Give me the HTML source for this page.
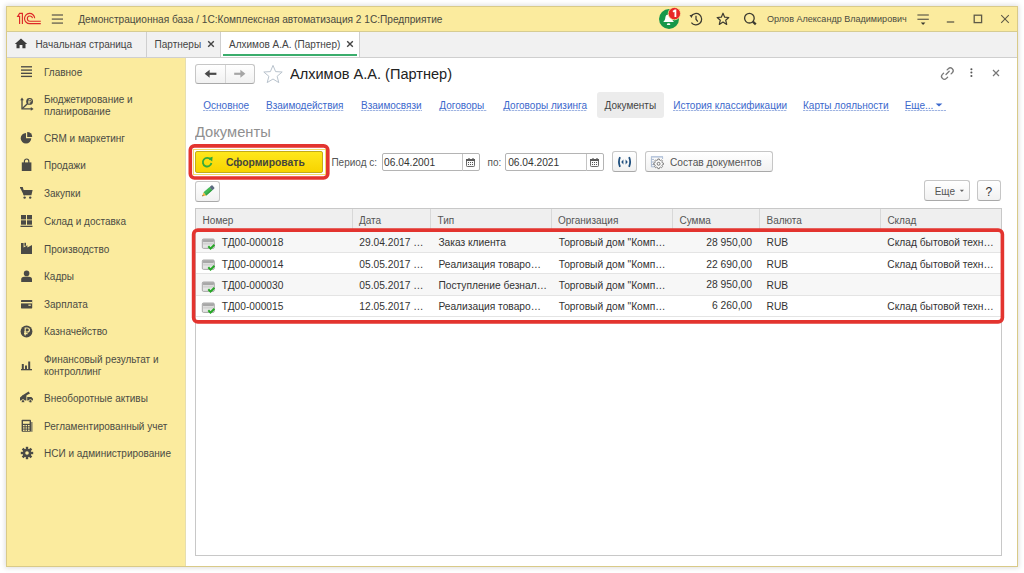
<!DOCTYPE html>
<html><head><meta charset="utf-8">
<style>
*{box-sizing:border-box;margin:0;padding:0}
html,body{width:1024px;height:573px;overflow:hidden;background:#fff;font-family:"Liberation Sans",sans-serif;color:#333}
.a{position:absolute;white-space:nowrap}
svg.a{overflow:visible}
</style></head><body>
<div class="a" style="left:6px;top:6px;width:1012px;height:561px;background:#fff;box-shadow:0 0 5px 1px rgba(0,0,0,0.13)"></div>
<div class="a" style="left:6px;top:6px;width:1012px;height:26px;background:#fbeb9e;border-bottom:1px solid #d6cc92"></div>
<div class="a" style="left:6px;top:32px;width:1012px;height:26px;background:#f1f1f1;border-bottom:1px solid #cfcfcf"></div>
<div class="a" style="left:6px;top:58px;width:180px;height:509px;background:#fbeb9e"></div>
<div class="a" style="left:185px;top:58px;width:1px;height:509px;background:#e6deb0"></div>
<div class="a" style="left:6px;top:6px;width:1012px;height:561px;border:1px solid #d9ca88"></div>
<div class="a" style="left:78.2px;top:15.42px;font-size:10.13px;line-height:10.13px;color:#4a4a40;font-weight:normal;">Демонстрационная база / 1С:Комплексная автоматизация 2 1С:Предприятие</div>
<div class="a" style="left:767px;top:14.32px;font-size:9.9px;line-height:9.9px;color:#4a4a40;font-weight:normal;transform:scaleX(0.9152);transform-origin:0 0;">Орлов Александр Владимирович</div>
<div class="a" style="left:35.4px;top:40.23px;font-size:10px;line-height:10px;color:#444;font-weight:normal;">Начальная страница</div>
<div class="a" style="left:146px;top:32px;width:1px;height:25px;background:#cfcfcf"></div>
<div class="a" style="left:154.6px;top:40.23px;font-size:10px;line-height:10px;color:#444;font-weight:normal;">Партнеры</div>
<div class="a" style="left:220px;top:32px;width:1px;height:25px;background:#cfcfcf"></div>
<div class="a" style="left:221px;top:32px;width:138px;height:25px;background:#fff"></div>
<div class="a" style="left:223px;top:54px;width:134px;height:2px;background:#3aad6c"></div>
<div class="a" style="left:229px;top:40.23px;font-size:10px;line-height:10px;color:#444;font-weight:normal;">Алхимов А.А. (Партнер)</div>
<div class="a" style="left:359px;top:32px;width:1px;height:25px;background:#cfcfcf"></div>
<div class="a" style="left:44px;top:67.63px;font-size:10px;line-height:10px;color:#4b4b44;font-weight:normal;">Главное</div>
<div class="a" style="left:44px;top:94.63px;font-size:10px;line-height:10px;color:#4b4b44;font-weight:normal;">Бюджетирование и</div>
<div class="a" style="left:44px;top:106.63px;font-size:10px;line-height:10px;color:#4b4b44;font-weight:normal;">планирование</div>
<div class="a" style="left:44px;top:133.63px;font-size:10px;line-height:10px;color:#4b4b44;font-weight:normal;">CRM и маркетинг</div>
<div class="a" style="left:44px;top:160.63px;font-size:10px;line-height:10px;color:#4b4b44;font-weight:normal;">Продажи</div>
<div class="a" style="left:44px;top:188.63px;font-size:10px;line-height:10px;color:#4b4b44;font-weight:normal;">Закупки</div>
<div class="a" style="left:44px;top:216.63px;font-size:10px;line-height:10px;color:#4b4b44;font-weight:normal;">Склад и доставка</div>
<div class="a" style="left:44px;top:244.63px;font-size:10px;line-height:10px;color:#4b4b44;font-weight:normal;">Производство</div>
<div class="a" style="left:44px;top:271.63px;font-size:10px;line-height:10px;color:#4b4b44;font-weight:normal;">Кадры</div>
<div class="a" style="left:44px;top:299.63px;font-size:10px;line-height:10px;color:#4b4b44;font-weight:normal;">Зарплата</div>
<div class="a" style="left:44px;top:327.13px;font-size:10px;line-height:10px;color:#4b4b44;font-weight:normal;">Казначейство</div>
<div class="a" style="left:44px;top:354.63px;font-size:10px;line-height:10px;color:#4b4b44;font-weight:normal;">Финансовый результат и</div>
<div class="a" style="left:44px;top:366.63px;font-size:10px;line-height:10px;color:#4b4b44;font-weight:normal;">контроллинг</div>
<div class="a" style="left:44px;top:393.63px;font-size:10px;line-height:10px;color:#4b4b44;font-weight:normal;">Внеоборотные активы</div>
<div class="a" style="left:44px;top:421.63px;font-size:10px;line-height:10px;color:#4b4b44;font-weight:normal;">Регламентированный учет</div>
<div class="a" style="left:44px;top:448.63px;font-size:10px;line-height:10px;color:#4b4b44;font-weight:normal;">НСИ и администрирование</div>
<div class="a" style="left:195px;top:64px;width:60px;height:20px;border:1px solid #c6c6c6;border-bottom-color:#a9a9a9;border-radius:3px;background:linear-gradient(#fff,#f1f1f1)"></div>
<div class="a" style="left:225px;top:65px;width:1px;height:18px;background:#d6d6d6"></div>
<div class="a" style="left:290.2px;top:66.06px;font-size:15.4px;line-height:15.4px;color:#222;font-weight:normal;transform:scaleX(0.9461);transform-origin:0 0;">Алхимов А.А. (Партнер)</div>
<div class="a" style="left:203.3px;top:100.93px;font-size:10px;line-height:10px;color:#3b68cc;font-weight:normal;">Основное</div>
<div class="a" style="left:203.3px;top:110px;width:46px;height:1px;background:repeating-linear-gradient(90deg,#9fb4e2 0 2px,#dfe6f5 2px 3px)"></div>
<div class="a" style="left:266px;top:100.93px;font-size:10px;line-height:10px;color:#3b68cc;font-weight:normal;">Взаимодействия</div>
<div class="a" style="left:266px;top:110px;width:78px;height:1px;background:repeating-linear-gradient(90deg,#9fb4e2 0 2px,#dfe6f5 2px 3px)"></div>
<div class="a" style="left:361px;top:100.93px;font-size:10px;line-height:10px;color:#3b68cc;font-weight:normal;">Взаимосвязи</div>
<div class="a" style="left:361px;top:110px;width:61px;height:1px;background:repeating-linear-gradient(90deg,#9fb4e2 0 2px,#dfe6f5 2px 3px)"></div>
<div class="a" style="left:439.3px;top:100.93px;font-size:10px;line-height:10px;color:#3b68cc;font-weight:normal;">Договоры</div>
<div class="a" style="left:439.3px;top:110px;width:48px;height:1px;background:repeating-linear-gradient(90deg,#9fb4e2 0 2px,#dfe6f5 2px 3px)"></div>
<div class="a" style="left:503.2px;top:100.93px;font-size:10px;line-height:10px;color:#3b68cc;font-weight:normal;">Договоры лизинга</div>
<div class="a" style="left:503.2px;top:110px;width:84px;height:1px;background:repeating-linear-gradient(90deg,#9fb4e2 0 2px,#dfe6f5 2px 3px)"></div>
<div class="a" style="left:597px;top:92px;width:67px;height:26px;background:#ececec;border-radius:3px"></div>
<div class="a" style="left:604.6px;top:100.93px;font-size:10px;line-height:10px;color:#444;font-weight:normal;">Документы</div>
<div class="a" style="left:673.2px;top:100.93px;font-size:10px;line-height:10px;color:#3b68cc;font-weight:normal;">История классификации</div>
<div class="a" style="left:673.2px;top:110px;width:114px;height:1px;background:repeating-linear-gradient(90deg,#9fb4e2 0 2px,#dfe6f5 2px 3px)"></div>
<div class="a" style="left:803px;top:100.93px;font-size:10px;line-height:10px;color:#3b68cc;font-weight:normal;">Карты лояльности</div>
<div class="a" style="left:803px;top:110px;width:86px;height:1px;background:repeating-linear-gradient(90deg,#9fb4e2 0 2px,#dfe6f5 2px 3px)"></div>
<div class="a" style="left:904.7px;top:100.93px;font-size:10px;line-height:10px;color:#3b68cc;font-weight:normal;">Еще...</div>
<div class="a" style="left:904.7px;top:110px;width:41px;height:1px;background:repeating-linear-gradient(90deg,#9fb4e2 0 2px,#dfe6f5 2px 3px)"></div>
<div class="a" style="left:195.0px;top:124.23px;font-size:15.2px;line-height:15.2px;color:#8f8f8f;font-weight:normal;transform:scaleX(0.9671);transform-origin:0 0;">Документы</div>
<div class="a" style="left:193px;top:149px;width:132.5px;height:26.2px;border:1px solid #f3dc6c;background:#fff"></div>
<div class="a" style="left:195px;top:151px;width:128px;height:21.5px;border:1px solid #c2ab1a;border-radius:2px;background:linear-gradient(#ffe71c,#f7d400)"></div>
<div class="a" style="left:225.9px;top:158.12px;font-size:10.37px;line-height:10.37px;color:#46463c;font-weight:bold;">Сформировать</div>
<div class="a" style="left:331.4px;top:157.73px;font-size:10px;line-height:10px;color:#555;font-weight:normal;">Период с:</div>
<div class="a" style="left:381.5px;top:153px;width:98px;height:18px;border:1px solid #b4b4b4;border-radius:2px;background:#fff"></div>
<div class="a" style="left:462px;top:154px;width:1px;height:16.5px;background:#c4c4c4"></div>
<div class="a" style="left:384.1px;top:157.56px;font-size:10.2px;line-height:10.2px;color:#333;font-weight:normal;">06.04.2001</div>
<div class="a" style="left:487.6px;top:157.73px;font-size:10px;line-height:10px;color:#555;font-weight:normal;">по:</div>
<div class="a" style="left:505.2px;top:153px;width:98.5px;height:18px;border:1px solid #b4b4b4;border-radius:2px;background:#fff"></div>
<div class="a" style="left:586px;top:154px;width:1px;height:16.5px;background:#c4c4c4"></div>
<div class="a" style="left:508.2px;top:157.56px;font-size:10.2px;line-height:10.2px;color:#333;font-weight:normal;">06.04.2021</div>
<div class="a" style="left:612px;top:151px;width:25px;height:21px;border:1px solid #c6c6c6;border-bottom-color:#a9a9a9;border-radius:3px;background:linear-gradient(#fff,#f1f1f1)"></div>
<div class="a" style="left:645px;top:151px;width:128px;height:21px;border:1px solid #c6c6c6;border-bottom-color:#a9a9a9;border-radius:3px;background:linear-gradient(#fff,#f1f1f1)"></div>
<div class="a" style="left:670px;top:157.56px;font-size:10.2px;line-height:10.2px;color:#555;font-weight:normal;">Состав документов</div>
<div class="a" style="left:195px;top:180.5px;width:25px;height:21px;border:1px solid #c6c6c6;border-bottom-color:#a9a9a9;border-radius:3px;background:linear-gradient(#fff,#f1f1f1)"></div>
<div class="a" style="left:923.5px;top:180px;width:46px;height:21px;border:1px solid #c6c6c6;border-bottom-color:#a9a9a9;border-radius:3px;background:linear-gradient(#fff,#f1f1f1)"></div>
<div class="a" style="left:934.7px;top:187.33px;font-size:10px;line-height:10px;color:#555;font-weight:normal;">Еще</div>
<div class="a" style="left:977px;top:180px;width:24px;height:21px;border:1px solid #c6c6c6;border-bottom-color:#a9a9a9;border-radius:3px;background:linear-gradient(#fff,#f1f1f1)"></div>
<div class="a" style="left:985.6px;top:185.84px;font-size:12px;line-height:12px;color:#333;font-weight:normal;">?</div>
<div class="a" style="left:195px;top:208px;width:807px;height:348px;border:1px solid #c8c8c8;background:#fff"></div>
<div class="a" style="left:196px;top:209px;width:805px;height:22px;background:#efefef;border-bottom:1px solid #dcdcdc"></div>
<div class="a" style="left:202.6px;top:215.93px;font-size:10px;line-height:10px;color:#555;font-weight:normal;">Номер</div>
<div class="a" style="left:352px;top:209px;width:1px;height:22px;background:#d8d8d8"></div>
<div class="a" style="left:359px;top:215.93px;font-size:10px;line-height:10px;color:#555;font-weight:normal;">Дата</div>
<div class="a" style="left:430px;top:209px;width:1px;height:22px;background:#d8d8d8"></div>
<div class="a" style="left:437.5px;top:215.93px;font-size:10px;line-height:10px;color:#555;font-weight:normal;">Тип</div>
<div class="a" style="left:551px;top:209px;width:1px;height:22px;background:#d8d8d8"></div>
<div class="a" style="left:558px;top:215.93px;font-size:10px;line-height:10px;color:#555;font-weight:normal;">Организация</div>
<div class="a" style="left:672px;top:209px;width:1px;height:22px;background:#d8d8d8"></div>
<div class="a" style="left:679.5px;top:215.93px;font-size:10px;line-height:10px;color:#555;font-weight:normal;">Сумма</div>
<div class="a" style="left:759px;top:209px;width:1px;height:22px;background:#d8d8d8"></div>
<div class="a" style="left:766.5px;top:215.93px;font-size:10px;line-height:10px;color:#555;font-weight:normal;">Валюта</div>
<div class="a" style="left:880px;top:209px;width:1px;height:22px;background:#d8d8d8"></div>
<div class="a" style="left:887.4px;top:215.93px;font-size:10px;line-height:10px;color:#555;font-weight:normal;">Склад</div>
<div class="a" style="left:196px;top:231px;width:805px;height:21.6px;background:#f7f7f7;border-bottom:1px solid #e4e4e4"></div>
<div class="a" style="left:221.8px;top:237.96px;font-size:10.2px;line-height:10.2px;color:#333;font-weight:normal;">ТД00-000018</div>
<div class="a" style="left:359.3px;top:237.95px;font-size:10.22px;line-height:10.22px;color:#333;font-weight:normal;">29.04.2017 …</div>
<div class="a" style="left:438.4px;top:237.95px;font-size:10.22px;line-height:10.22px;color:#333;font-weight:normal;">Заказ клиента</div>
<div class="a" style="left:558.7px;top:237.95px;font-size:10.22px;line-height:10.22px;color:#333;font-weight:normal;">Торговый дом "Комп…</div>
<div class="a" style="left:672px;width:80px;text-align:right;top:237.88px;font-size:10.3px;line-height:10.3px;color:#333">28 950,00</div>
<div class="a" style="left:766.6px;top:237.95px;font-size:10.22px;line-height:10.22px;color:#333;font-weight:normal;">RUB</div>
<div class="a" style="left:887.3px;top:237.95px;font-size:10.22px;line-height:10.22px;color:#333;font-weight:normal;">Склад бытовой техн…</div>
<div class="a" style="left:196px;top:252.6px;width:805px;height:21.6px;border-bottom:1px solid #e4e4e4"></div>
<div class="a" style="left:221.8px;top:259.66px;font-size:10.2px;line-height:10.2px;color:#333;font-weight:normal;">ТД00-000014</div>
<div class="a" style="left:359.3px;top:259.65px;font-size:10.22px;line-height:10.22px;color:#333;font-weight:normal;">05.05.2017 …</div>
<div class="a" style="left:438.4px;top:259.65px;font-size:10.22px;line-height:10.22px;color:#333;font-weight:normal;">Реализация товаро…</div>
<div class="a" style="left:558.7px;top:259.65px;font-size:10.22px;line-height:10.22px;color:#333;font-weight:normal;">Торговый дом "Комп…</div>
<div class="a" style="left:672px;width:80px;text-align:right;top:259.58px;font-size:10.3px;line-height:10.3px;color:#333">22 690,00</div>
<div class="a" style="left:766.6px;top:259.65px;font-size:10.22px;line-height:10.22px;color:#333;font-weight:normal;">RUB</div>
<div class="a" style="left:887.3px;top:259.65px;font-size:10.22px;line-height:10.22px;color:#333;font-weight:normal;">Склад бытовой техн…</div>
<div class="a" style="left:196px;top:274.2px;width:805px;height:21.6px;background:#f7f7f7;border-bottom:1px solid #e4e4e4"></div>
<div class="a" style="left:221.8px;top:280.56px;font-size:10.2px;line-height:10.2px;color:#333;font-weight:normal;">ТД00-000030</div>
<div class="a" style="left:359.3px;top:280.55px;font-size:10.22px;line-height:10.22px;color:#333;font-weight:normal;">05.05.2017 …</div>
<div class="a" style="left:438.4px;top:280.55px;font-size:10.22px;line-height:10.22px;color:#333;font-weight:normal;">Поступление безнал…</div>
<div class="a" style="left:558.7px;top:280.55px;font-size:10.22px;line-height:10.22px;color:#333;font-weight:normal;">Торговый дом "Комп…</div>
<div class="a" style="left:672px;width:80px;text-align:right;top:280.48px;font-size:10.3px;line-height:10.3px;color:#333">28 950,00</div>
<div class="a" style="left:766.6px;top:280.55px;font-size:10.22px;line-height:10.22px;color:#333;font-weight:normal;">RUB</div>
<div class="a" style="left:196px;top:295.8px;width:805px;height:21.6px;border-bottom:1px solid #e4e4e4"></div>
<div class="a" style="left:221.8px;top:301.56px;font-size:10.2px;line-height:10.2px;color:#333;font-weight:normal;">ТД00-000015</div>
<div class="a" style="left:359.3px;top:301.55px;font-size:10.22px;line-height:10.22px;color:#333;font-weight:normal;">12.05.2017 …</div>
<div class="a" style="left:438.4px;top:301.55px;font-size:10.22px;line-height:10.22px;color:#333;font-weight:normal;">Реализация товаро…</div>
<div class="a" style="left:558.7px;top:301.55px;font-size:10.22px;line-height:10.22px;color:#333;font-weight:normal;">Торговый дом "Комп…</div>
<div class="a" style="left:672px;width:80px;text-align:right;top:301.48px;font-size:10.3px;line-height:10.3px;color:#333">6 260,00</div>
<div class="a" style="left:766.6px;top:301.55px;font-size:10.22px;line-height:10.22px;color:#333;font-weight:normal;">RUB</div>
<div class="a" style="left:887.3px;top:301.55px;font-size:10.22px;line-height:10.22px;color:#333;font-weight:normal;">Склад бытовой техн…</div>
<svg class="a" style="left:12px;top:8px" width="34" height="22" viewBox="0 0 34 22"><g fill="none" stroke="#dd2828" stroke-width="1.15" stroke-linejoin="miter"><path d="M7.6 16.1 L7.6 8.3 L5.7 8.3 L7.6 5.4 L10.4 5.4 L10.4 16.1"/><path d="M22.7 10.2 A5.1 5.1 0 1 0 17.8 15.6 L28.8 15.6"/><path d="M20.5 10.2 A2.6 2.6 0 1 0 17.9 13.2 L28.8 13.2"/></g></svg>
<svg class="a" style="left:51px;top:13px" width="13" height="12" viewBox="0 0 13 12"><g stroke="#77715a" stroke-width="1.5"><line x1="0.8" y1="2" x2="12" y2="2"/><line x1="0.8" y1="6.1" x2="12" y2="6.1"/><line x1="0.8" y1="10.1" x2="12" y2="10.1"/></g></svg>
<svg class="a" style="left:656px;top:6px" width="28" height="26" viewBox="0 0 28 26"><circle cx="13" cy="13" r="10" fill="#17984a"/><path d="M7.2 16 C8.6 14.6 9.2 13.3 9.4 11.2 C9.6 9 11 8.4 12.6 8.4 C14.2 8.4 15.6 9 15.8 11.2 C16 13.3 16.6 14.6 18 16 Z" fill="#fff"/><ellipse cx="12.6" cy="18.2" rx="1.8" ry="0.9" fill="#fff"/><circle cx="18.4" cy="7.6" r="6.2" fill="#e82626" stroke="#fbeb9e" stroke-width="0.8"/><path d="M17 5.8 L19 4.3 L19.4 4.3 L19.4 11" stroke="#fff" stroke-width="1.8" fill="none"/></svg>
<svg class="a" style="left:688px;top:11px" width="16" height="16" viewBox="0 0 16 16"><g fill="none" stroke="#3c3a30" stroke-width="1.25"><path d="M3.2 5 A5.7 5.7 0 1 1 3.4 11.6"/><path d="M8 4.8 L8 8.2 L9.8 10.6"/></g><path d="M1.5 4.2 L5 3.6 L3.6 7 Z" fill="#3c3a30"/></svg>
<svg class="a" style="left:716px;top:12px" width="14" height="14" viewBox="0 0 14 14"><path d="M7 1.2 L8.7 5.2 L12.8 5.5 L9.7 8.2 L10.7 12.4 L7 10.1 L3.3 12.4 L4.3 8.2 L1.2 5.5 L5.3 5.2 Z" fill="none" stroke="#3c3a30" stroke-width="1.2" stroke-linejoin="round"/></svg>
<svg class="a" style="left:742px;top:11px" width="16" height="16" viewBox="0 0 16 16"><circle cx="7.4" cy="7.2" r="4.8" fill="none" stroke="#3c3a30" stroke-width="1.3"/><path d="M10.8 10.6 L13.8 13.4" stroke="#3c3a30" stroke-width="2.2"/></svg>
<svg class="a" style="left:916px;top:13px" width="14" height="13" viewBox="0 0 14 13"><g stroke="#6b6650" stroke-width="1.3"><line x1="1.4" y1="2" x2="12.8" y2="2"/><line x1="1.4" y1="6.3" x2="12.8" y2="6.3"/></g><path d="M4.8 9.6 L9.4 9.6 L7.1 12 Z" fill="#3c3a30"/></svg>
<svg class="a" style="left:946px;top:20px" width="9" height="4" viewBox="0 0 9 4"><line x1="0.8" y1="2" x2="8.2" y2="2" stroke="#5e5a48" stroke-width="1.3"/></svg>
<svg class="a" style="left:973px;top:14px" width="10" height="10" viewBox="0 0 10 10"><rect x="1.2" y="1.2" width="7.4" height="7.4" fill="none" stroke="#5e5a48" stroke-width="1.3"/></svg>
<svg class="a" style="left:1000px;top:14px" width="10" height="10" viewBox="0 0 10 10"><path d="M1.2 1.2 L8.8 8.8 M8.8 1.2 L1.2 8.8" stroke="#5e5a48" stroke-width="1.05"/></svg>
<svg class="a" style="left:14px;top:38px" width="14" height="11" viewBox="0 0 14 11"><path d="M7 0.6 L13.2 6 L11.5 6 L11.5 10.2 L8.4 10.2 L8.4 7 L5.6 7 L5.6 10.2 L2.5 10.2 L2.5 6 L0.8 6 Z" fill="#3b3b3b"/></svg>
<svg class="a" style="left:207px;top:40px" width="8" height="8" viewBox="0 0 8 8"><path d="M1.2 1.2 L6.8 6.8 M6.8 1.2 L1.2 6.8" stroke="#444" stroke-width="1.4"/></svg>
<svg class="a" style="left:346px;top:40px" width="8" height="8" viewBox="0 0 8 8"><path d="M1.2 1.2 L6.8 6.8 M6.8 1.2 L1.2 6.8" stroke="#444" stroke-width="1.4"/></svg>
<svg class="a" style="left:20px;top:65px" width="13" height="13" viewBox="0 0 13 13"><g stroke="#4a4a46" stroke-width="1.35"><line x1="1" y1="1.8" x2="12" y2="1.8"/><line x1="1" y1="5.1" x2="12" y2="5.1"/><line x1="1" y1="8.3" x2="12" y2="8.3"/><line x1="1" y1="11.4" x2="12" y2="11.4"/></g></svg>
<svg class="a" style="left:20px;top:97px" width="14" height="14" viewBox="0 0 14 14"><g stroke="#4a4a46" stroke-width="1.35" fill="none"><path d="M2 2.6 L2 11.9 L11.6 11.9"/><path d="M2.4 11.4 L7.6 6.6"/></g><path d="M0.2 3.2 L2 0.6 L3.8 3.2 Z M10.8 10.1 L13.6 11.9 L10.8 13.7 Z" fill="#4a4a46"/><circle cx="9.6" cy="4.4" r="3.4" fill="#4a4a46"/><path d="M9 6.9 L9 2.5 L10.3 2.5 Q11.3 2.5 11.3 3.6 Q11.3 4.7 10.3 4.7 L8.2 4.7 M8.2 5.8 L10.3 5.8" stroke="#fbeb9e" stroke-width="0.75" fill="none"/></svg>
<svg class="a" style="left:20px;top:131px" width="13" height="13" viewBox="0 0 13 13"><path d="M6 2 A5.3 5.3 0 1 0 11.3 7.3 L6 7.3 Z" fill="#4a4a46"/><path d="M7.2 0.9 A5 5 0 0 1 12.2 5.9 L7.2 5.9 Z" fill="#4a4a46"/></svg>
<svg class="a" style="left:20px;top:158px" width="13" height="14" viewBox="0 0 13 14"><path d="M1.8 4.4 L11.4 4.4 L11.4 13 L1.8 13 Z" fill="#4a4a46"/><path d="M4.4 5 L4.4 3.2 A2.2 2.2 0 0 1 8.8 3.2 L8.8 5" fill="none" stroke="#4a4a46" stroke-width="1.2"/></svg>
<svg class="a" style="left:19px;top:186px" width="15" height="14" viewBox="0 0 15 14"><path d="M1 1.6 L3.3 1.6 L4.3 4 L13.6 4 L12.4 9.2 L4.8 9.2 Z" fill="#4a4a46"/><path d="M1 1.6 L3.3 1.6 L5.4 9.4" stroke="#4a4a46" stroke-width="1.2" fill="none"/><circle cx="5.6" cy="11.6" r="1.2" fill="#4a4a46"/><circle cx="11.2" cy="11.6" r="1.2" fill="#4a4a46"/></svg>
<svg class="a" style="left:20px;top:214px" width="13" height="14" viewBox="0 0 13 14"><g fill="#4a4a46"><rect x="1" y="1" width="5" height="4.4"/><rect x="7" y="1" width="5" height="4.4"/><rect x="1" y="6.3" width="5" height="4.4"/><rect x="7" y="6.3" width="5" height="4.4"/><rect x="0.5" y="11.7" width="12" height="1.3"/></g></svg>
<svg class="a" style="left:20px;top:242px" width="13" height="13" viewBox="0 0 13 13"><path d="M1 12 L1 1 L3.6 1 L3.6 5.4 L7.4 3.2 L7.4 5.6 L12 3 L12 12 Z" fill="#4a4a46"/><rect x="4.4" y="0.8" width="1.6" height="3" fill="#4a4a46"/></svg>
<svg class="a" style="left:20px;top:270px" width="13" height="13" viewBox="0 0 13 13"><circle cx="6.6" cy="3.4" r="2.8" fill="#4a4a46"/><path d="M1.2 12 L1.2 9.6 Q1.2 6.8 4.2 6.8 L9 6.8 Q12 6.8 12 9.6 L12 12 Z" fill="#4a4a46"/></svg>
<svg class="a" style="left:20px;top:299px" width="13" height="11" viewBox="0 0 13 11"><rect x="1" y="1" width="11.2" height="8.4" rx="0.6" fill="#4a4a46"/><rect x="1" y="3" width="11.2" height="1.4" fill="#fbeb9e"/><rect x="8.4" y="5.6" width="2.4" height="1.2" fill="#fbeb9e"/></svg>
<svg class="a" style="left:20px;top:325px" width="13" height="13" viewBox="0 0 13 13"><circle cx="6.5" cy="6.5" r="5.9" fill="#4a4a46"/><path d="M5.2 10.4 L5.2 3 L7.4 3 Q9.4 3 9.4 5 Q9.4 7 7.4 7 L4 7 M4 8.6 L7.6 8.6" stroke="#fbeb9e" stroke-width="1.2" fill="none"/></svg>
<svg class="a" style="left:20px;top:360px" width="13" height="11" viewBox="0 0 13 11"><g fill="#4a4a46"><rect x="1" y="9" width="11" height="1.3"/><rect x="1.8" y="4" width="2" height="5.5"/><rect x="5" y="5.5" width="2" height="4"/><rect x="8.2" y="1.5" width="2" height="8"/></g></svg>
<svg class="a" style="left:19px;top:390px" width="15" height="14" viewBox="0 0 15 14"><path d="M1 10.6 L1 7.6 L4 5 L7.4 5 L7.4 10.6 Z M8.2 7 L12.4 7 L14 8.8 L14 10.6 L8.2 10.6 Z" fill="#4a4a46"/><path d="M3.2 5.6 L9.6 1.6 L11 3.6 L5 6.6" fill="#4a4a46"/><circle cx="4" cy="11.2" r="1.6" fill="#4a4a46" stroke="#fbeb9e" stroke-width="0.8"/><circle cx="11.4" cy="11.2" r="1.6" fill="#4a4a46" stroke="#fbeb9e" stroke-width="0.8"/></svg>
<svg class="a" style="left:20px;top:419px" width="14" height="14" viewBox="0 0 14 14"><rect x="1.6" y="0.8" width="9.4" height="12" rx="0.8" fill="#4a4a46"/><rect x="3" y="2.2" width="6.6" height="2.6" fill="#fbeb9e"/><g fill="#fbeb9e"><rect x="3" y="6" width="1.6" height="1.3"/><rect x="5.5" y="6" width="1.6" height="1.3"/><rect x="8" y="6" width="1.6" height="1.3"/><rect x="3" y="8.3" width="1.6" height="1.3"/><rect x="5.5" y="8.3" width="1.6" height="1.3"/><rect x="8" y="8.3" width="1.6" height="1.3"/><rect x="3" y="10.6" width="1.6" height="1.3"/><rect x="5.5" y="10.6" width="1.6" height="1.3"/><rect x="8" y="10.6" width="1.6" height="1.3"/></g><rect x="11" y="3" width="1.6" height="9.8" fill="#8b876c"/></svg>
<svg class="a" style="left:20px;top:446px" width="14" height="14" viewBox="0 0 14 14"><g transform="translate(7 7)"><circle r="4.3" fill="#4a4a46"/><g fill="#4a4a46"><rect x="-1.2" y="-6.2" width="2.4" height="12.4"/><rect x="-6.2" y="-1.2" width="12.4" height="2.4"/><rect x="-1.2" y="-6.2" width="2.4" height="12.4" transform="rotate(45)"/><rect x="-1.2" y="-6.2" width="2.4" height="12.4" transform="rotate(-45)"/></g><circle r="1.8" fill="#fbeb9e"/></g></svg>
<svg class="a" style="left:203px;top:68px" width="16" height="12" viewBox="0 0 16 12"><path d="M3 5.8 L13.4 5.8" stroke="#4a4a4a" stroke-width="2.2"/><path d="M1.6 5.8 L6.6 1.8 L6.6 9.8 Z" fill="#4a4a4a"/></svg>
<svg class="a" style="left:232px;top:68px" width="16" height="12" viewBox="0 0 16 12"><path d="M2.2 5.8 L12 5.8" stroke="#a6a6a6" stroke-width="2.2"/><path d="M13.4 5.8 L8.4 1.8 L8.4 9.8 Z" fill="#a6a6a6"/></svg>
<svg class="a" style="left:262px;top:64px" width="22" height="20" viewBox="0 0 22 20"><path d="M11 1.4 L13.6 7.6 L20.2 8 L15.1 12.3 L16.8 18.6 L11 15 L5.2 18.6 L6.9 12.3 L1.8 8 L8.4 7.6 Z" fill="none" stroke="#b9c3cd" stroke-width="1" stroke-linejoin="round"/></svg>
<svg class="a" style="left:938px;top:64px" width="18" height="18" viewBox="0 0 18 18"><g fill="none" stroke="#7a7a7a" stroke-width="1.3" stroke-linecap="round"><path d="M9.1 5.9 L10.3 4.7 A2.8 2.8 0 0 1 14.3 8.7 L13.1 9.9"/><path d="M5.6 9.2 L4.4 10.4 A2.8 2.8 0 0 0 8.4 14.4 L9.6 13.2"/><path d="M8 10.5 L11.2 7.3"/></g></svg>
<svg class="a" style="left:968px;top:66px" width="6" height="13" viewBox="0 0 6 13"><g fill="#555"><circle cx="3.4" cy="3.2" r="1.05"/><circle cx="3.4" cy="6.5" r="1.05"/><circle cx="3.4" cy="10" r="1.05"/></g></svg>
<svg class="a" style="left:991px;top:68px" width="10" height="10" viewBox="0 0 10 10"><path d="M2 2 L8 8 M8 2 L2 8" stroke="#777" stroke-width="1.2"/></svg>
<svg class="a" style="left:934px;top:102px" width="12" height="6" viewBox="0 0 12 6"><path d="M1.6 1.4 L8.4 1.4 L5 4.6 Z" fill="#3b68cc"/></svg>
<svg class="a" style="left:200px;top:155px" width="14" height="14" viewBox="0 0 14 14"><path d="M10.6 4.6 A4.3 4.3 0 1 0 11.4 8" fill="none" stroke="#33aa3a" stroke-width="1.8"/><path d="M8 3.2 L12.6 1.8 L12.2 6.6 Z" fill="#33aa3a"/></svg>
<svg class="a" style="left:466px;top:158px" width="10" height="10" viewBox="0 0 10 10"><rect x="0.5" y="1.5" width="8" height="7" rx="0.8" fill="#fafafa" stroke="#6a6a6a" stroke-width="1"/><rect x="0" y="1" width="9" height="2" fill="#5a5a5a"/><rect x="2" y="0" width="2" height="1" fill="#999"/><rect x="6" y="0" width="2" height="1" fill="#999"/><g fill="#555"><rect x="2" y="4" width="1" height="1"/><rect x="4" y="4" width="1" height="1"/><rect x="6" y="4" width="1" height="1"/><rect x="2" y="6" width="1" height="1"/><rect x="4" y="6" width="1" height="1"/><rect x="6" y="6" width="1" height="1"/></g></svg>
<svg class="a" style="left:590px;top:158px" width="10" height="10" viewBox="0 0 10 10"><rect x="0.5" y="1.5" width="8" height="7" rx="0.8" fill="#fafafa" stroke="#6a6a6a" stroke-width="1"/><rect x="0" y="1" width="9" height="2" fill="#5a5a5a"/><rect x="2" y="0" width="2" height="1" fill="#999"/><rect x="6" y="0" width="2" height="1" fill="#999"/><g fill="#555"><rect x="2" y="4" width="1" height="1"/><rect x="4" y="4" width="1" height="1"/><rect x="6" y="4" width="1" height="1"/><rect x="2" y="6" width="1" height="1"/><rect x="4" y="6" width="1" height="1"/><rect x="6" y="6" width="1" height="1"/></g></svg>
<svg class="a" style="left:616px;top:155px" width="17" height="14" viewBox="0 0 17 14"><g fill="none" stroke="#1f4f7e" stroke-width="1.8"><path d="M4 2.2 Q1.9 7 4 11.8"/><path d="M13.1 2.2 Q15.2 7 13.1 11.8"/></g><path d="M7.4 4.6 L5.2 7 L7.4 9.4 Z M9.6 4.6 L11.8 7 L9.6 9.4 Z" fill="#1f4f7e"/></svg>
<svg class="a" style="left:650px;top:154px" width="16" height="18" viewBox="0 0 16 18"><g fill="none" stroke="#a9b9d2" stroke-width="1"><path d="M1.4 2.6 L1.4 12.8 L5 12.8"/><path d="M1.4 2.6 L12.6 2.6 L12.6 5"/><path d="M1.4 5.4 L4 5.4 M1.4 8 L4 8 M1.4 10.6 L4 10.6"/></g><rect x="1.2" y="2" width="11.6" height="1.6" fill="#b9c7dc"/><g transform="translate(8.6 9.8) scale(0.82)"><path d="M-0.9 -5 L0.9 -5 L1.2 -3.6 L2.4 -3.1 L3.5 -3.9 L4.8 -2.6 L4 -1.5 L4.5 -0.3 L5.9 0 L5.9 1.8 L4.5 2.1 L4 3.3 L4.8 4.4 L3.5 5.7 L2.4 4.9 L1.2 5.4 L0.9 6.8 L-0.9 6.8 L-1.2 5.4 L-2.4 4.9 L-3.5 5.7 L-4.8 4.4 L-4 3.3 L-4.5 2.1 L-5.9 1.8 L-5.9 0 L-4.5 -0.3 L-4 -1.5 L-4.8 -2.6 L-3.5 -3.9 L-2.4 -3.1 L-1.2 -3.6 Z" fill="#fafafa" stroke="#6a6a6a" stroke-width="1" transform="translate(0 -0.9)"/><circle cx="0" cy="0" r="1.8" fill="none" stroke="#6a6a6a" stroke-width="1.1"/></g></svg>
<svg class="a" style="left:199px;top:183px" width="18" height="16" viewBox="0 0 18 16"><g transform="translate(3.2 13.3) rotate(-41)"><path d="M0 0 L3.6 -2.1 L3.6 2.1 Z" fill="#f2b443"/><path d="M0 0 L1.3 -0.75 L1.3 0.75 Z" fill="#4a3a2a"/><rect x="3.6" y="-2.1" width="8" height="4.2" fill="#41b953"/><rect x="3.6" y="0.7" width="8" height="1.4" fill="#33a044"/><rect x="11.6" y="-2.1" width="3.2" height="4.2" rx="0.8" fill="#5b6b80"/></g></svg>
<svg class="a" style="left:959px;top:189px" width="6" height="4" viewBox="0 0 6 4"><path d="M0.8 0.8 L5 0.8 L2.9 3 Z" fill="#666"/></svg>
<svg class="a" style="left:201px;top:237.5px" width="15" height="12" viewBox="0 0 15 12"><rect x="1.3" y="1" width="12" height="9.4" rx="1.2" fill="#e4e4e4" stroke="#9f9f9f" stroke-width="0.9"/><rect x="1.6" y="1.3" width="11.4" height="2.6" rx="0.8" fill="#a8a8a8"/><rect x="2.2" y="4.6" width="10.2" height="2" fill="#d2d2d2"/><path d="M7.3 8.3 L9.5 10.6 L13.4 6.7" fill="none" stroke="#27a827" stroke-width="2"/></svg>
<svg class="a" style="left:201px;top:259px" width="15" height="12" viewBox="0 0 15 12"><rect x="1.3" y="1" width="12" height="9.4" rx="1.2" fill="#e4e4e4" stroke="#9f9f9f" stroke-width="0.9"/><rect x="1.6" y="1.3" width="11.4" height="2.6" rx="0.8" fill="#a8a8a8"/><rect x="2.2" y="4.6" width="10.2" height="2" fill="#d2d2d2"/><path d="M7.3 8.3 L9.5 10.6 L13.4 6.7" fill="none" stroke="#27a827" stroke-width="2"/></svg>
<svg class="a" style="left:201px;top:280.5px" width="15" height="12" viewBox="0 0 15 12"><rect x="1.3" y="1" width="12" height="9.4" rx="1.2" fill="#e4e4e4" stroke="#9f9f9f" stroke-width="0.9"/><rect x="1.6" y="1.3" width="11.4" height="2.6" rx="0.8" fill="#a8a8a8"/><rect x="2.2" y="4.6" width="10.2" height="2" fill="#d2d2d2"/><path d="M7.3 8.3 L9.5 10.6 L13.4 6.7" fill="none" stroke="#27a827" stroke-width="2"/></svg>
<svg class="a" style="left:201px;top:302px" width="15" height="12" viewBox="0 0 15 12"><rect x="1.3" y="1" width="12" height="9.4" rx="1.2" fill="#e4e4e4" stroke="#9f9f9f" stroke-width="0.9"/><rect x="1.6" y="1.3" width="11.4" height="2.6" rx="0.8" fill="#a8a8a8"/><rect x="2.2" y="4.6" width="10.2" height="2" fill="#d2d2d2"/><path d="M7.3 8.3 L9.5 10.6 L13.4 6.7" fill="none" stroke="#27a827" stroke-width="2"/></svg>
<svg class="a" style="left:0px;top:0px" width="1024" height="573" viewBox="0 0 1024 573"><rect x="190.3" y="145.85" width="137.5" height="32.15" rx="4.2" fill="none" stroke="#e3342f" stroke-width="3.6"/><rect x="193.6" y="230.1" width="808.8" height="91.8" rx="4.2" fill="none" stroke="#e3342f" stroke-width="3.6"/></svg>
</body></html>
